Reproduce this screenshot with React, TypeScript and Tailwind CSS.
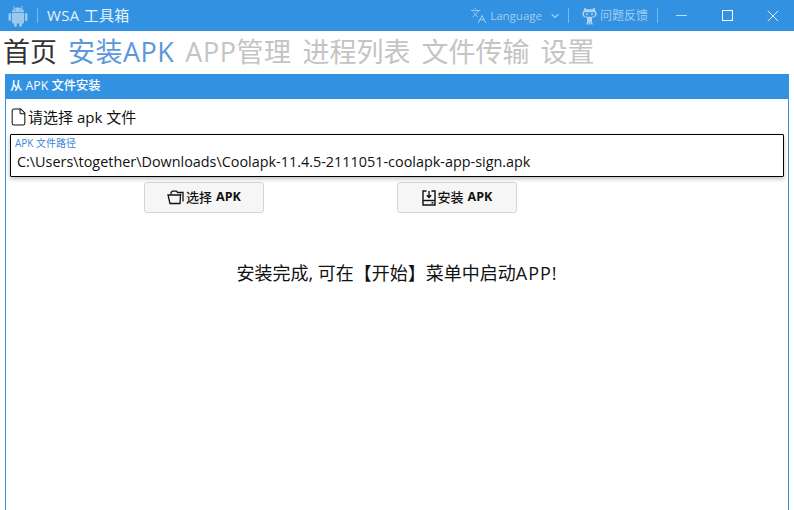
import React from 'react';
import { Languages, ChevronDown, Minus, X, File } from 'lucide-react';

const FONT = "font-['Open_Sans','Noto_Sans_CJK_SC',sans-serif]";

const tabs = [
  { label: '首页', color: 'text-[#333333]' },
  { label: '安装APK', color: 'text-[#5c98dc] tracking-[0.5px]' },
  { label: 'APP管理', color: 'text-[#c4c4c4] tracking-[0.5px]' },
  { label: '进程列表', color: 'text-[#c4c4c4]' },
  { label: '文件传输', color: 'text-[#c4c4c4]' },
  { label: '设置', color: 'text-[#c4c4c4]' },
];

const AndroidIcon = () => (
  <svg width="22" height="22" viewBox="0 0 22 22" fill="#9cc8ee" className="ml-[7px]">
    <path d="M5 7.2C5 4.6 7.6 2.6 11 2.6s6 2 6 4.6H5z" />
    <path d="M6.2 1 8 3.6M15.8 1 14 3.6" stroke="#9cc8ee" strokeWidth="1" fill="none" />
    <path d="M5 8h12v9.5a1 1 0 0 1-1 1H6a1 1 0 0 1-1-1V8z" />
    <rect x="1.5" y="8" width="2.6" height="8" rx="1.3" />
    <rect x="17.9" y="8" width="2.6" height="8" rx="1.3" />
    <rect x="7" y="17" width="2.8" height="5" rx="1.4" />
    <rect x="12.2" y="17" width="2.8" height="5" rx="1.4" />
    <circle cx="8.3" cy="5" r="0.7" fill="#3291e0" />
    <circle cx="13.7" cy="5" r="0.7" fill="#3291e0" />
  </svg>
);

const OctocatIcon = () => (
  <svg width="15" height="18" viewBox="0 0 15 18" fill="#a9d2f3" className="ml-[13px]">
    <path d="M2.2 0.6 5 2.2h5L12.8 0.6l.4 3c1 1 1.4 2.2 1.4 3.4C14.6 9.8 12 11 7.5 11S.4 9.8.4 7c0-1.2.4-2.4 1.4-3.4l.4-3z" />
    <path d="M2.4 5.2h10.2c.7 1 .7 3.8-1 4.2-2.6.5-5.6.5-8.2 0-1.7-.4-1.7-3.2-1-4.2z" fill="#3291e0" />
    <circle cx="5" cy="7.2" r="1" />
    <circle cx="10" cy="7.2" r="1" />
    <path d="M5 11h5v3.5l.8 3H8.7v-2h-.6v2H6.9v-2h-.6v2H4.2l.8-3V11z" />
  </svg>
);

const FolderIcon = () => (
  <svg width="17" height="15" viewBox="0 0 17 15" fill="none" stroke="#111" strokeWidth="1.3">
    <path d="M4 4.5V2.5L5.5 1.2h4l1 1.3h5.5V11.5" />
    <path d="M1 5h12l.6-1L13 13.5H3L1 5z" />
  </svg>
);

const InstallIcon = () => (
  <svg width="14" height="16" viewBox="0 0 14 16" fill="none" stroke="#111" strokeWidth="1.4">
    <path d="M4.5 1H1v14h12V1H9.5" />
    <path d="M7 1v6M4.8 5.2 7 7.4l2.2-2.2" />
    <path d="M1 10.5h12" />
    <path d="M9.5 12.8h2" />
  </svg>
);

const ActionButton = ({ icon, cn }: { icon: React.ReactNode; cn: string }) => (
  <button className="w-[120px] h-[31px] flex items-center justify-center gap-[2px] rounded-[3px] border border-[#d4d4d4] bg-[#f6f6f6] text-[13px] text-[#111]">
    {icon}
    <span className="font-medium">{cn}</span>
    <span className="font-bold ml-[2px] text-[12.5px]">APK</span>
  </button>
);

export default function App() {
  return (
    <div className={`${FONT} w-[794px] h-[510px] overflow-hidden bg-white flex flex-col`}>
      <header className="h-[31px] shrink-0 bg-[#3291e0] flex items-center text-white">
        <AndroidIcon />
        <div className="ml-[8px] w-px h-[15px] bg-[#7db9ea]" />
        <span className="ml-[9px] text-[15px] text-[#e6f2fc] tracking-[0.3px]">WSA 工具箱</span>
        <div className="ml-auto flex items-center h-full text-[#a3cef2]">
          <Languages className="w-[17px] h-[17px]" strokeWidth={1.4} />
          <span className="ml-[3px] text-[11.5px]">Language</span>
          <ChevronDown className="ml-[7px] w-[12px] h-[12px]" strokeWidth={2.2} />
          <div className="ml-[7px] w-px h-[15px] bg-[#7db9ea]" />
          <OctocatIcon />
          <span className="ml-[3px] text-[12px]">问题反馈</span>
          <div className="ml-[9px] w-px h-[15px] bg-[#7db9ea]" />
          <div className="w-[46px] h-full flex items-center justify-center">
            <Minus className="w-[17px] h-[17px] text-white" strokeWidth={1} />
          </div>
          <div className="w-[46px] h-full flex items-center justify-center">
            <div className="w-[11px] h-[11px] border border-white" />
          </div>
          <div className="w-[44px] pl-[2px] h-full flex items-center justify-center">
            <X className="w-[20px] h-[20px] text-white" strokeWidth={1} />
          </div>
        </div>
      </header>

      <nav className="h-[41px] mb-[2px] shrink-0 flex items-center pl-[3px] gap-[11px]">
        {tabs.map((t) => (
          <span key={t.label} className={`text-[27px] leading-none ${t.color}`}>{t.label}</span>
        ))}
      </nav>

      <section className="mx-[5px] flex-1 flex flex-col border-x border-[#3291e0]">
        <div className="h-[25px] shrink-0 bg-[#3291e0] -mx-px flex items-center pl-[5px] text-[12.3px] font-medium text-white">
          从 APK 文件安装
        </div>
        <div className="flex items-center h-[36px] pl-[3px] text-[15px] text-[#111]">
          <File className="w-[19px] h-[20px]" strokeWidth={1.3} />
          <span>请选择 apk 文件</span>
        </div>
        <div className="mx-[4px] h-[43px] -mt-px border border-black rounded-[1px] shadow-[0_2px_4px_rgba(0,0,0,0.25)] pl-[4px] flex flex-col">
          <span className="text-[10px] leading-[12px] mt-[2px] text-[#3f86d8]">APK 文件路径</span>
          <span className="text-[14.4px] leading-[20px] mt-[3px] pl-[2px] text-[#111] whitespace-nowrap">C:\Users\together\Downloads\Coolapk-11.4.5-2111051-coolapk-app-sign.apk</span>
        </div>
        <div className="flex pl-[138px] gap-[133px] mt-[5px]">
          <ActionButton icon={<FolderIcon />} cn="选择" />
          <ActionButton icon={<InstallIcon />} cn="安装" />
        </div>
        <p className="mt-[48px] text-center text-[18px] leading-[24px] text-[#111]">
          安装完成, 可在【开始】菜单中启动<span className="tracking-[1px]">APP!</span>
        </p>
      </section>
    </div>
  );
}
